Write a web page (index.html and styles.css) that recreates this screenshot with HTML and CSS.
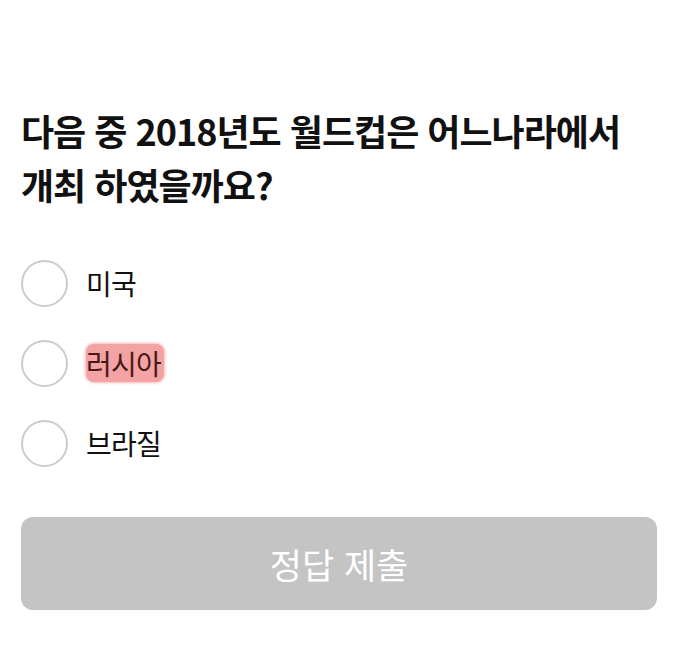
FILE: index.html
```html
<!DOCTYPE html>
<html lang="ko">
<head>
<meta charset="utf-8">
<link rel="stylesheet" href="styles.css">
</head>
<body>
<main class="quiz">
  <h1 class="question">다음 중 2018년도 월드컵은 어느나라에서<br>개최 하였을까요?</h1>
  <ul class="options">
    <li class="option"><span class="radio"></span><span class="label">미국</span></li>
    <li class="option"><span class="radio"></span><span class="label mark">러시아</span></li>
    <li class="option"><span class="radio"></span><span class="label">브라질</span></li>
  </ul>
  <button class="submit" type="button">정답 제출</button>
</main>
</body>
</html>
```

FILE: styles.css
```css
html, body {
  margin: 0;
  padding: 0;
  background: #ffffff;
}
body {
  font-family: "Noto Sans CJK KR", "Noto Sans", sans-serif;
  color: #111111;
}
.quiz {
  padding: 103px 21px 0 21px;
  display: flex;
  flex-direction: column;
}
.question {
  margin: 0;
  font-size: 36px;
  font-weight: 700;
  line-height: 54px;
  letter-spacing: -1px;
  color: #111111;
}
.options {
  list-style: none;
  margin: 49px 0 0 0;
  padding: 0;
  display: flex;
  flex-direction: column;
  gap: 34px;
}
.option {
  display: flex;
  align-items: center;
  gap: 18px;
  height: 46px;
}
.radio {
  width: 43px;
  height: 43px;
  border: 2px solid #cccccc;
  border-radius: 50%;
  box-sizing: content-box;
  flex: none;
}
.label {
  font-size: 28px;
  line-height: 38px;
  color: #111111;
  letter-spacing: -0.8px;
}
.mark {
  background: #f3a3a3;
  color: #4a1a1a;
  border-radius: 8px;
  box-shadow: 0 0 3px 1px #f6b8b8;
  padding: 0 3px 0 0;
}
.submit {
  margin-top: 51px;
  height: 93px;
  border: none;
  border-radius: 12px;
  background: #c4c4c4;
  color: #ffffff;
  font-family: "Noto Sans CJK KR", "Noto Sans", sans-serif;
  font-size: 35px;
  font-weight: 400;
}
```
